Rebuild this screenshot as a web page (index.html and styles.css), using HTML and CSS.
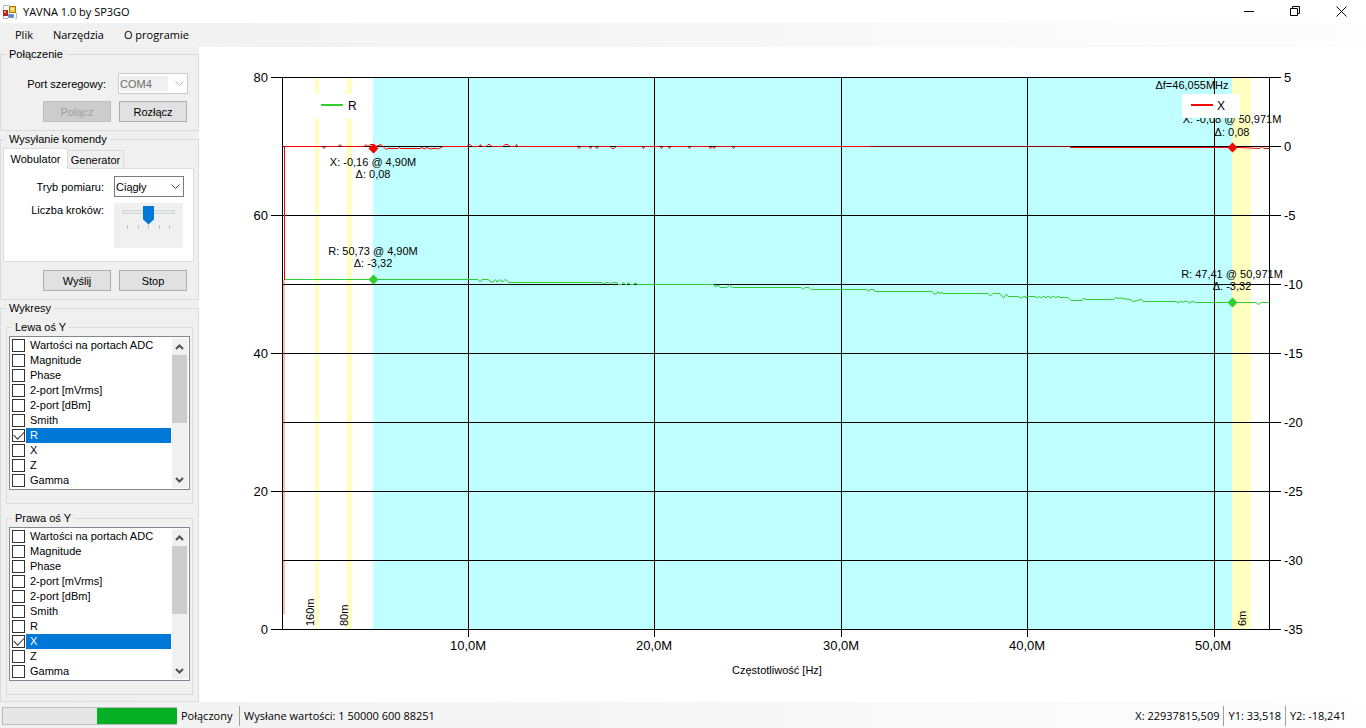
FILE: index.html
```html
<!DOCTYPE html>
<html lang="pl">
	<head>
		<meta charset="utf-8">
		<title>YAVNA 1.0 by SP3GO</title>
		<link rel="stylesheet" href="styles.css">
	</head>
	<body>
		<header class="titlebar">
			<svg class="app-icon" width="14" height="14" viewBox="0 0 14 14">
				<path d="M.5 4V.5H6M.5 11v2.500H5M13.500 8v5.500H12" fill="none" stroke="#b5b5b5"/>
				<rect x="0" y="5" width="5" height="6" fill="#b8241c"/>
				<rect x="1" y="6" width="2" height="2" fill="#f0907c"/>
				<rect x="6.500" y="1.500" width="6" height="6" fill="#fbc93a" stroke="#a8790f"/>
				<rect x="8" y="3" width="3" height="2" fill="#ffe99a"/>
				<rect x="5.500" y="9.500" width="5" height="3" fill="#4a86e8" stroke="#7d9fd0"/>
			</svg>
			<h1>YAVNA 1.0 by SP3GO</h1>
			<div class="window-btns">
				<button aria-label="Minimalizuj"><svg width="11" height="11" viewBox="0 0 11 11"><path d="M0 5.500h10"/></svg></button>
				<button aria-label="Przywróć"><svg width="11" height="11" viewBox="0 0 11 11"><path d="M.5 2.500h7v7h-7zM2.500 2.500v-2h7v7h-2"/></svg></button>
				<button aria-label="Zamknij"><svg width="11" height="11" viewBox="0 0 11 11"><path d="M.5.5l10 10M10.500.5l-10 10"/></svg></button>
			</div>
		</header>
		<nav class="menu">
			<a href="#">Plik</a>
			<a href="#">Narzędzia</a>
			<a href="#">O programie</a>
		</nav>
		<main class="main">
			<aside class="sidebar">
				<fieldset class="group connection">
					<legend>Połączenie</legend>
					<div class="row">
						<label for="port">Port szeregowy:</label>
						<div class="select">
							<select id="port" disabled><option>COM4</option></select>
							<svg width="9" height="6" viewBox="0 0 9 6"><path d="M.5.5l4 4 4-4"/></svg>
						</div>
					</div>
					<div class="row buttons">
						<button class="btn" disabled>Połącz</button>
						<button class="btn">Rozłącz</button>
					</div>
				</fieldset>

				<fieldset class="group command">
					<legend>Wysyłanie komendy</legend>
					<div class="tabs" role="tablist">
						<button class="tab active" role="tab">Wobulator</button>
						<button class="tab" role="tab">Generator</button>
					</div>
					<div class="tab-page">
						<div class="row">
							<label for="mode">Tryb pomiaru:</label>
							<div class="select">
								<select id="mode"><option>Ciągły</option><option>Pojedynczy</option></select>
								<svg width="9" height="6" viewBox="0 0 9 6"><path d="M.5.5l4 4 4-4"/></svg>
							</div>
						</div>
						<div class="row steps">
							<label for="steps">Liczba kroków:</label>
							<div class="slider">
								<input type="range" id="steps" min="0" max="4" value="2">
								<div class="ticks"><i></i><i></i><i></i><i></i><i></i></div>
							</div>
						</div>
					</div>
					<div class="row buttons">
						<button class="btn">Wyślij</button>
						<button class="btn">Stop</button>
					</div>
				</fieldset>

				<fieldset class="group charts">
					<legend>Wykresy</legend>
					<fieldset class="group axis">
						<legend>Lewa oś Y</legend>
						<div class="listbox">
							<div class="items">
								<label><input type="checkbox"><span>Wartości na portach ADC</span></label>
								<label><input type="checkbox"><span>Magnitude</span></label>
								<label><input type="checkbox"><span>Phase</span></label>
								<label><input type="checkbox"><span>2-port [mVrms]</span></label>
								<label><input type="checkbox"><span>2-port [dBm]</span></label>
								<label><input type="checkbox"><span>Smith</span></label>
								<label class="selected"><input type="checkbox" checked><span>R</span></label>
								<label><input type="checkbox"><span>X</span></label>
								<label><input type="checkbox"><span>Z</span></label>
								<label><input type="checkbox"><span>Gamma</span></label>
							</div>
							<div class="scroll">
								<svg width="9" height="6" viewBox="0 0 9 6"><path d="M1 5l3.500-3.500L8 5"/></svg>
								<div class="thumb"></div>
								<svg width="9" height="6" viewBox="0 0 9 6"><path d="M1 1l3.500 3.500L8 1"/></svg>
							</div>
						</div>
					</fieldset>
					<fieldset class="group axis">
						<legend>Prawa oś Y</legend>
						<div class="listbox">
							<div class="items">
								<label><input type="checkbox"><span>Wartości na portach ADC</span></label>
								<label><input type="checkbox"><span>Magnitude</span></label>
								<label><input type="checkbox"><span>Phase</span></label>
								<label><input type="checkbox"><span>2-port [mVrms]</span></label>
								<label><input type="checkbox"><span>2-port [dBm]</span></label>
								<label><input type="checkbox"><span>Smith</span></label>
								<label><input type="checkbox"><span>R</span></label>
								<label class="selected"><input type="checkbox" checked><span>X</span></label>
								<label><input type="checkbox"><span>Z</span></label>
								<label><input type="checkbox"><span>Gamma</span></label>
							</div>
							<div class="scroll">
								<svg width="9" height="6" viewBox="0 0 9 6"><path d="M1 5l3.500-3.500L8 5"/></svg>
								<div class="thumb"></div>
								<svg width="9" height="6" viewBox="0 0 9 6"><path d="M1 1l3.500 3.500L8 1"/></svg>
							</div>
						</div>
					</fieldset>
				</fieldset>
			</aside>

			<section class="chart">
				<svg viewBox="199 47 1167 655">
					<!-- bands -->
					<g class="band">
						<rect x="315" y="78" width="4" height="551"/>
						<rect x="347" y="78" width="5" height="551"/>
						<rect x="1232" y="78" width="19" height="551"/>
					</g>
					<rect class="range" x="373" y="78" width="859" height="551"/>

					<!-- grid and axes -->
					<path class="grid" d="M271 77.500H1281M282 146.500H1281M271 215.500H1281M282 284.500H1281M271 353.500H1281M282 422.500H1281M271 491.500H1281M282 560.500H1281M271 629.500H1281"/>
					<path class="grid" d="M282.500 77V630M468.500 77V637M654.500 77V637M841.500 77V637M1027.500 77V637M1214.500 77V637M1269.500 77V630"/>

					<!-- series -->
					<path class="series-r" d="M284.500 279.500H478L480.500 282L482 279.500H488L491 282H493L495.500 279.500L497 282L500 279.500L502 282L505.500 279.500L509 282.500H602L603.500 284L606 282.500H609L610.500 284L612.500 282.500H617L618 284.500H622L623.500 282.500L625 284.500H627L628.500 282.500L630 284.500H634L635 282.500L637 284.500H714L715.500 287L718 285L720 287.500H727L729.500 284.500L732 287.500H801L803 289.500L805 287.500H809L811 289.500H867L868.500 291.500L870 289.500H874L875 291.500H932L934 294H936L938 291.500L939.500 294L941 292L943 293.500H988L990.500 296L993 293.500H1000L1003.500 298L1006.500 294L1008 296.500H1018L1021 298L1025 296L1026 298L1028 296.500H1035L1037 298L1039 296.500L1041 298L1044 296L1046 298L1048 296L1050 298L1053 296L1056 298L1058 296L1060 297.500H1068L1071 300.500H1082L1084 298L1085.500 299.500H1114L1116 297L1118 299L1120 297.500L1122 298.500L1130 299.500L1133 301.500L1138 300.500L1141 299L1143 301.500H1176L1178 303L1181 301L1183 302.500L1185 301L1188 302L1190 303.500L1192 301L1195 302.500H1256L1258.500 304.500L1261 302.500H1269"/>
					<path class="series-x faded" d="M284 614V280"/>
					<path class="series-x" d="M284.500 280V146.500H322L324 148.500L326 146.500H338L340 144.500L342 146.500H364L366 144.500L368 146.500L370 144.500H374L376 146.500L381 144.500L383 146.500L386 149.500L388 148.500H398L399 147.500L401 148.500H420L422 147.500L424 149L427 147.500L430 149L433 148.500H436L438 149L441 147.500L443 146.500H467L469 144.500H470L472 146.500H479L480.500 144.500L482 146.500H486L488 144.500H490L492 146.500H503L505 144.500H508L510 146.500H515L516.500 144.500L518 146.500H577L579 148.500L581 146.500H589L590.500 148.500L592 146.500H595L597 148.500L599 146.500H610L612 148.500H614L616 146.500H642L643.500 148.500L645 146.500H660L661.500 148.500L663 146.500H668L669.500 148.500L671 146.500H688L689.500 148.500L691 146.500H709L710.500 148.500L712 146.500L714 148.500L716 146.500H732L733.500 148.500L735 146.500H870"/>
					<path class="series-x faded" d="M870 146.500H1070"/>
					<path class="series-x" d="M1070 147.500H1240L1260 148.500L1262 146.500L1264 148.500H1269"/>

					<!-- markers -->
					<path class="mark-x" d="M373.500 143.500l5 5-5 5-5-5zM1232.500 142.500l5 5-5 5-5-5z"/>
					<path class="mark-r" d="M373.500 274.500l5 5-5 5-5-5zM1232.500 297.500l5 5-5 5-5-5z"/>
					<g class="note">
						<text x="373" y="166">X: -0,16 @ 4,90M</text>
						<text x="373" y="178">Δ: 0,08</text>
						<text x="373" y="255">R: 50,73 @ 4,90M</text>
						<text x="373" y="267">Δ: -3,32</text>
						<text x="1192" y="89">Δf=46,055MHz</text>
						<text x="1232" y="123">X: -0,08 @ 50,971M</text>
						<text x="1232" y="136">Δ: 0,08</text>
						<text x="1232" y="278">R: 47,41 @ 50,971M</text>
						<text x="1232" y="290">Δ: -3,32</text>
						<text x="777" y="674">Częstotliwość [Hz]</text>
					</g>
					<g class="band-name">
						<text transform="translate(314 626) rotate(-90)">160m</text>
						<text transform="translate(348 626) rotate(-90)">80m</text>
						<text transform="translate(1246 626) rotate(-90)">6m</text>
					</g>

					<!-- legends -->
					<g class="legend">
						<rect x="315" y="94" width="58" height="24"/>
						<path class="line-r" d="M321 105h22"/>
						<text x="348" y="110">R</text>
						<rect x="1182" y="94" width="58" height="24"/>
						<path class="line-x" d="M1191 105h22"/>
						<text x="1217" y="110">X</text>
					</g>

					<!-- scales -->
					<g class="scale left">
						<text x="268" y="82">80</text>
						<text x="268" y="220">60</text>
						<text x="268" y="358">40</text>
						<text x="268" y="496">20</text>
						<text x="268" y="634">0</text>
					</g>
					<g class="scale right">
						<text x="1284" y="82">5</text>
						<text x="1284" y="151">0</text>
						<text x="1284" y="220">-5</text>
						<text x="1284" y="289">-10</text>
						<text x="1284" y="358">-15</text>
						<text x="1284" y="427">-20</text>
						<text x="1284" y="496">-25</text>
						<text x="1284" y="565">-30</text>
						<text x="1284" y="634">-35</text>
					</g>
					<g class="scale bottom">
						<text x="468" y="650">10,0M</text>
						<text x="654" y="650">20,0M</text>
						<text x="841" y="650">30,0M</text>
						<text x="1027" y="650">40,0M</text>
						<text x="1213" y="650">50,0M</text>
					</g>
				</svg>
			</section>
		</main>
		<footer class="status">
			<div class="progress" role="progressbar" aria-label="Połączony"><div class="bar"></div></div>
			<span class="state">Połączony</span>
			<span class="sent">Wysłane wartości: 1 50000 600 88251</span>
			<span class="pos">X: 22937815,509</span>
			<span class="pos">Y1: 33,518</span>
			<span class="pos">Y2: -18,241</span>
		</footer>
	</body>
</html>
```
FILE: styles.css
```css
*{
	margin: 0;
	padding: 0;
	box-sizing: border-box;
}
body{
	display: flex;
	flex-direction: column;
	min-height: 100vh;
	font-family: "Liberation Sans", Arial, sans-serif;
	font-size: 11px;
	line-height: 14px;
	color: #000;
	background: #fff;
}
button, select, input{
	font: inherit;
	color: inherit;
	border-radius: 0;
}
a{
	color: inherit;
	text-decoration: none;
}

/* title bar */
.titlebar{
	display: flex;
	align-items: center;
	height: 23px;
	padding: 0 2px 0 3px;
}
.titlebar h1{
	flex: 1;
	margin-left: 6px;
	font: 11px/16px "Open Sans", sans-serif;
}
.window-btns{
	display: flex;
}
.window-btns button{
	width: 46px;
	height: 21px;
	border: 0;
	background: none;
}
.window-btns svg{
	display: block;
	margin: 0 auto;
	fill: none;
	stroke: #000;
}

/* menu */
.menu{
	display: flex;
	height: 24px;
	padding-left: 5px;
	font: 11px/24px "Open Sans", sans-serif;
	background: linear-gradient(to right, #f0f0f0, #fdfdfd);
}
.menu a{
	padding: 0 10px;
}

.main{
	display: flex;
	flex: 1;
}

/* left panel */
.sidebar{
	flex: none;
	width: 199px;
	background: #f0f0f0;
}
.group{
	min-width: 0;
	border: 1px solid #dcdcdc;
}
.group > legend{
	margin-left: 5px;
	padding: 0 3px;
}
.row{
	display: flex;
	justify-content: flex-end;
	align-items: center;
	gap: 12px;
	padding-right: 10px;
}
.row.buttons{
	gap: 8px;
	padding-right: 11px;
}
.connection{
	height: 84px;
}
.connection .row{
	margin-top: 12px;
}
.connection .buttons{
	margin-top: 7px;
}
.btn{
	width: 68px;
	height: 21px;
	border: 1px solid #adadad;
	background: #e1e1e1;
}
.btn:disabled{
	border-color: #bfbfbf;
	background: #ccc;
	color: #a0a0a0;
}
.select{
	position: relative;
	width: 70px;
	height: 21px;
}
.select select{
	appearance: none;
	width: 100%;
	height: 100%;
	padding-left: 1px;
	border: 1px solid #7a7a7a;
	background: #fff;
}
.select select:disabled{
	border-color: #ccc;
	background: linear-gradient(#f0f0f0, #f0f0f0) 1px 2px / 48px 15px no-repeat #fff;
	color: #6d6d6d;
	opacity: 1;
}
.select svg{
	position: absolute;
	top: 8px;
	right: 4px;
	fill: none;
	stroke: #444;
	pointer-events: none;
}
.select select:disabled + svg{
	stroke: #b5b5b5;
}
.command{
	height: 168px;
	margin-top: 1px;
}
.tabs{
	display: flex;
	align-items: flex-end;
	height: 22px;
	margin-left: 2px;
}
.tab{
	height: 18px;
	width: 56px;
	border: 1px solid #dcdcdc;
	border-left: 0;
	border-bottom: 0;
	background: #f0f0f0;
}
.tab.active{
	position: relative;
	width: 65px;
	height: 21px;
	margin-bottom: -1px;
	border-left: 1px solid #dcdcdc;
	background: #fff;
}
.tab-page{
	height: 94px;
	margin: 0 4px 0 2px;
	padding-top: 7px;
	border: 1px solid #dcdcdc;
	background: #fff;
}
.tab-page .row{
	gap: 10px;
	padding-right: 9px;
}
.tab-page .steps{
	align-items: flex-start;
	margin-top: 6px;
	padding-right: 10px;
}
.slider{
	width: 69px;
	height: 45px;
	padding: 2px 8px;
	background: #f0f0f0;
}
.slider input{
	display: block;
	appearance: none;
	width: 53px;
	height: 20px;
	background: linear-gradient(#e7eaea, #e7eaea) 1px 6px / 51px 2px no-repeat,
		linear-gradient(#d6d6d6, #d6d6d6) 0 5px / 100% 4px no-repeat;
}
.slider input::-webkit-slider-thumb{
	appearance: none;
	width: 11px;
	height: 19px;
	background: #0078d7;
	clip-path: polygon(0 0, 100% 0, 100% 72%, 50% 100%, 0 72%);
}
.ticks{
	display: flex;
	justify-content: space-between;
	padding: 0 5px;
}
.ticks i{
	width: 1px;
	height: 4px;
	background: #c4c4c4;
}
.command > .buttons{
	margin-top: 8px;
}
.charts{
	height: 401px;
	margin-top: 1px;
	padding: 5px 5px 0;
}
.charts > legend{
	margin-left: 0;
}
.axis{
	height: 184px;
	padding: 2px 2px 0;
}
.axis > legend{
	margin-left: 3px;
}
.axis + .axis{
	margin-top: 7px;
}
.listbox{
	display: flex;
	height: 154px;
	padding: 1px;
	border: 1px solid #828790;
	background: #fff;
}
.items{
	flex: 1;
}
.items label{
	display: flex;
	align-items: center;
	height: 15px;
	padding-left: 1px;
}
.items input{
	appearance: none;
	width: 13px;
	height: 13px;
	border: 1px solid #333;
	background: #fff;
}
.items input:checked::before{
	content: "";
	display: block;
	width: 9px;
	height: 5px;
	border: solid #333;
	border-width: 0 0 1px 1px;
	transform: translate(1px, 1px) rotate(-45deg);
}
.items span{
	flex: 1;
	margin-left: 1px;
	padding-left: 4px;
	line-height: 15px;
	white-space: nowrap;
}
.items .selected span{
	color: #fff;
	background: #0078d7;
}
.scroll{
	display: flex;
	flex-direction: column;
	align-items: center;
	width: 16px;
	margin-left: 1px;
	padding: 6px 1px 5px 0;
	background: #f0f0f0;
}
.scroll svg{
	fill: none;
	stroke: #505050;
	stroke-width: 2;
}
.scroll svg:last-child{
	margin-top: auto;
}
.scroll .thumb{
	width: 15px;
	height: 68px;
	margin-top: 5px;
	background: #cdcdcd;
}

/* chart */
.chart{
	flex: 1;
	min-width: 0;
}
.chart svg{
	display: block;
	width: 100%;
	height: 100%;
}
.chart path{
	fill: none;
}
.band{
	fill: #ffffc0;
}
.range{
	fill: #c0ffff;
}
.chart .grid{
	stroke: #000;
	shape-rendering: crispEdges;
}
.series-r{
	stroke: #32cd32;
}
.series-x{
	stroke: #f00;
}
.series-x.faded{
	stroke-opacity: .55;
}
.chart .mark-x{
	fill: #f00;
}
.chart .mark-r{
	fill: #32cd32;
}
.note{
	text-anchor: middle;
}
.legend rect{
	fill: #fff;
}
.legend path{
	stroke-width: 2;
}
.legend .line-r{
	stroke: #32cd32;
}
.legend .line-x{
	stroke: #f00;
}
.legend text{
	font-size: 12px;
}
.scale{
	font-size: 13px;
}
.scale.left{
	text-anchor: end;
}
.scale.bottom{
	text-anchor: middle;
}

/* status bar */
.status{
	display: flex;
	align-items: center;
	height: 26px;
	padding: 1px 20px 0 2px;
	font: 11px/20px "Open Sans", sans-serif;
	background: linear-gradient(to right, #f0f0f0, #fdfdfd);
}
.status span{
	padding: 0 4px;
	white-space: nowrap;
}
.status .state{
	width: 62px;
}
.progress{
	width: 175px;
	height: 18px;
	border: 1px solid #bcbcbc;
	border-right: 0;
	background: #e6e6e6;
}
.progress .bar{
	width: 80px;
	height: 100%;
	margin-left: auto;
	background: #06b025;
}
.status .sent{
	flex: 1;
	border-left: 1px solid #a0a0a0;
}
.status .pos + .pos{
	border-left: 1px solid #a0a0a0;
}
.status .pos:last-child{
	padding-right: 0;
}
```
